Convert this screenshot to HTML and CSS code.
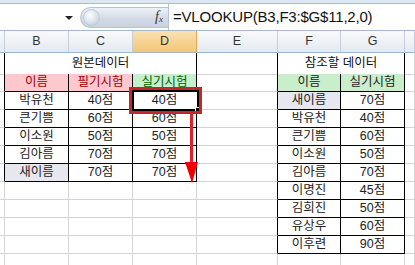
FILE: index.html
```html
<!DOCTYPE html>
<html lang="ko">
  <head>
    <meta charset="UTF-8" />
    <title>VLOOKUP</title>
    <link rel="stylesheet" href="styles.css">
  </head>
  <body>
    <div class="top-strip"></div>

    <!-- 수식 입력줄 -->
    <div class="formula-bar">
      <div class="name-box"><span class="drop"></span></div>
      <div class="fx-pill">
        <span class="knob"></span>
        <span class="fx">f<sub>x</sub></span>
      </div>
      <div class="formula">=VLOOKUP(B3,F3:$G$11,2,0)</div>
    </div>

    <!-- 열 머리글 -->
    <div class="grid col-heads">
      <div class="ch"></div>
      <div class="ch">B</div>
      <div class="ch">C</div>
      <div class="ch active">D</div>
      <div class="ch">E</div>
      <div class="ch">F</div>
      <div class="ch">G</div>
      <div class="ch"></div>
    </div>

    <div class="sheet">
      <div class="grid row r1">
        <div class="c edge"></div>
        <div class="c title span3 bk">원본데이터</div>
        <div class="c edge"></div>
        <div class="c title span2 bk">참조할 데이터</div>
        <div class="c"></div>
      </div>
      <div class="grid row">
        <div class="c edge"></div>
        <div class="c bk bad">이름</div>
        <div class="c bk bad">필기시험</div>
        <div class="c bk good">실기시험</div>
        <div class="c edge"></div>
        <div class="c bk head">이름</div>
        <div class="c bk head">실기시험</div>
        <div class="c"></div>
      </div>
      <div class="grid row">
        <div class="c edge"></div>
        <div class="c bk">박유천</div>
        <div class="c bk">40점</div>
        <div class="c bk">40점</div>
        <div class="c edge"></div>
        <div class="c bk lav">새이름</div>
        <div class="c bk">70점</div>
        <div class="c"></div>
      </div>
      <div class="grid row">
        <div class="c edge"></div>
        <div class="c bk">큰기쁨</div>
        <div class="c bk">60점</div>
        <div class="c bk">60점</div>
        <div class="c edge"></div>
        <div class="c bk">박유천</div>
        <div class="c bk">40점</div>
        <div class="c"></div>
      </div>
      <div class="grid row">
        <div class="c edge"></div>
        <div class="c bk">이소원</div>
        <div class="c bk">50점</div>
        <div class="c bk">50점</div>
        <div class="c edge"></div>
        <div class="c bk">큰기쁨</div>
        <div class="c bk">60점</div>
        <div class="c"></div>
      </div>
      <div class="grid row">
        <div class="c edge"></div>
        <div class="c bk">김아름</div>
        <div class="c bk">70점</div>
        <div class="c bk">70점</div>
        <div class="c edge"></div>
        <div class="c bk">이소원</div>
        <div class="c bk">50점</div>
        <div class="c"></div>
      </div>
      <div class="grid row">
        <div class="c edge"></div>
        <div class="c bk lav">새이름</div>
        <div class="c bk">70점</div>
        <div class="c bk">70점</div>
        <div class="c edge"></div>
        <div class="c bk">김아름</div>
        <div class="c bk">70점</div>
        <div class="c"></div>
      </div>
      <div class="grid row">
        <div class="c"></div>
        <div class="c"></div>
        <div class="c"></div>
        <div class="c"></div>
        <div class="c edge"></div>
        <div class="c bk">이명진</div>
        <div class="c bk">45점</div>
        <div class="c"></div>
      </div>
      <div class="grid row">
        <div class="c"></div>
        <div class="c"></div>
        <div class="c"></div>
        <div class="c"></div>
        <div class="c edge"></div>
        <div class="c bk">김희진</div>
        <div class="c bk">50점</div>
        <div class="c"></div>
      </div>
      <div class="grid row">
        <div class="c"></div>
        <div class="c"></div>
        <div class="c"></div>
        <div class="c"></div>
        <div class="c edge"></div>
        <div class="c bk">유상우</div>
        <div class="c bk">60점</div>
        <div class="c"></div>
      </div>
      <div class="grid row">
        <div class="c"></div>
        <div class="c"></div>
        <div class="c"></div>
        <div class="c"></div>
        <div class="c edge"></div>
        <div class="c bk">이후련</div>
        <div class="c bk">90점</div>
        <div class="c"></div>
      </div>
      <div class="grid row last">
        <div class="c"></div>
        <div class="c"></div>
        <div class="c"></div>
        <div class="c"></div>
        <div class="c"></div>
        <div class="c"></div>
        <div class="c"></div>
        <div class="c"></div>
      </div>
    </div>

    <!-- 선택 셀 표시와 화살표 -->
    <div class="active-cell"><span class="handle"></span></div>
    <div class="mark-box"></div>
    <div class="arrow-line"></div>
    <div class="arrow-head"></div>
  </body>
</html>
```

FILE: styles.css
```css
body {
  margin: 0;
  width: 415px;
  height: 265px;
  overflow: hidden;
  background: #fff;
  font-family: "Liberation Sans", "Noto Sans CJK KR", sans-serif;
  position: relative;
}

.top-strip {
  height: 3px;
  background: #dde7f3;
  border-bottom: 1px solid #a9bcd3;
}

.formula-bar {
  height: 26px;
  display: flex;
  align-items: center;
  border-bottom: 1px solid #a3b6cc;
}

.name-box {
  width: 77px;
  height: 100%;
  display: flex;
  align-items: center;
  justify-content: flex-end;
  box-sizing: border-box;
  padding-right: 4px;
}

.drop {
  width: 0;
  height: 0;
  border-left: 4px solid transparent;
  border-right: 4px solid transparent;
  border-top: 4px solid #222;
  margin-top: 2px;
}

.fx-pill {
  margin-left: 3px;
  width: 88px;
  height: 21px;
  box-sizing: border-box;
  border: 1px solid #b7c4d4;
  border-right: none;
  border-radius: 11px 0 0 11px;
  background: linear-gradient(#eef2f7, #d3dbe6 55%, #c9d2de);
  display: flex;
  align-items: center;
}

.knob {
  width: 15px;
  height: 15px;
  margin-left: 2px;
  border-radius: 50%;
  background: radial-gradient(circle at 40% 35%, #ffffff, #d6dde6 60%, #b9c4d1);
  border: 1px solid #c2ccd8;
}

.fx {
  margin-left: auto;
  margin-right: 5px;
  font-family: "Liberation Serif", serif;
  font-style: italic;
  font-size: 14px;
  color: #333;
}

.fx sub {
  font-size: 9px;
  vertical-align: -1px;
}

.formula {
  flex: 1;
  height: 100%;
  box-sizing: border-box;
  border-left: 1px solid #b7c4d4;
  padding-left: 4px;
  font-size: 15px;
  letter-spacing: -0.2px;
  line-height: 26px;
  color: #111;
  white-space: nowrap;
}

.grid {
  display: grid;
  grid-template-columns: 5px 64px 64px 64px 81px 63px 64px 1fr;
}

.col-heads {
  height: 22px;
}

.ch {
  box-sizing: border-box;
  border-right: 1px solid #c5ced9;
  border-bottom: 1px solid #9eb6ce;
  background: linear-gradient(#f9fafc, #e4e9f0);
  text-align: center;
  font-size: 12.5px;
  line-height: 21px;
  color: #333;
}

.ch.active {
  background: linear-gradient(#fae1b4, #f3c674);
  border-right-color: #e1ab55;
}

.row {
  height: 18px;
}

.row.r1 {
  height: 21px;
}

.row.last {
  height: 12px;
}

.c {
  box-sizing: border-box;
  border-right: 1px solid #d4d4d4;
  border-bottom: 1px solid #d4d4d4;
  text-align: center;
  font-size: 12.5px;
  line-height: 17px;
  color: #222;
  white-space: nowrap;
}

.r1 .c {
  line-height: 21px;
}

.c.edge {
  border-right-color: #000;
}

.c.bk {
  border-right-color: #000;
  border-bottom-color: #000;
}

.span3 {
  grid-column: span 3;
}

.span2 {
  grid-column: span 2;
}

.title {
  color: #111;
}

.bad {
  background: #ffc7ce;
  color: #9c0006;
}

.good {
  background: #c6efce;
  color: #006100;
}

.head {
  background: #c8eecb;
  color: #222;
}

.lav {
  background: #e7e7f0;
}

.active-cell {
  position: absolute;
  left: 132px;
  top: 90px;
  width: 67px;
  height: 21px;
  box-sizing: border-box;
  border: 2px solid #000;
  box-shadow: inset 0 0 0 1px #fff;
}

.handle {
  position: absolute;
  right: -5px;
  bottom: -5px;
  width: 5px;
  height: 5px;
  background: #000;
  border: 1px solid #fff;
}

.mark-box {
  position: absolute;
  left: 129px;
  top: 87px;
  width: 73px;
  height: 27px;
  box-sizing: border-box;
  border: 3px solid #c1272d;
}

.arrow-line {
  position: absolute;
  left: 190px;
  top: 114px;
  width: 3px;
  height: 52px;
  background: #e0202a;
}

.arrow-head {
  position: absolute;
  left: 185px;
  top: 162px;
  width: 0;
  height: 0;
  border-left: 7px solid transparent;
  border-right: 6px solid transparent;
  border-top: 21px solid #f00000;
}
```
